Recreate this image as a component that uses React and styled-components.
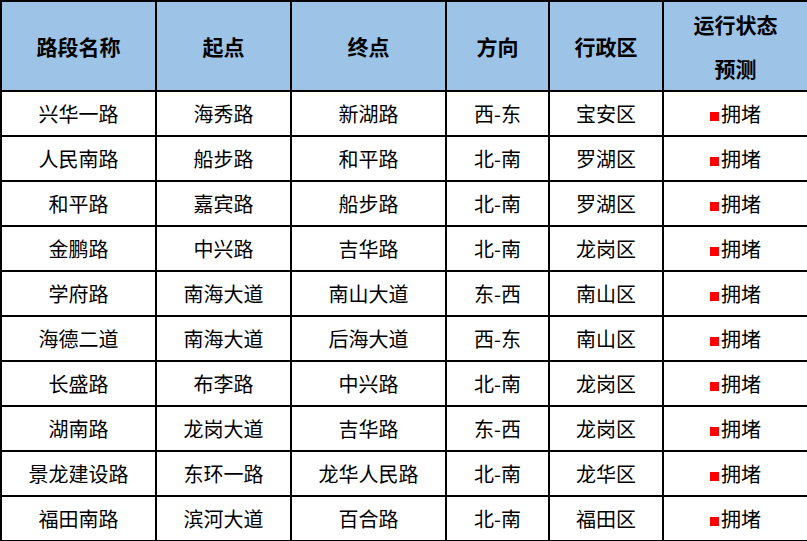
import React from "react";
import styled, { createGlobalStyle } from "styled-components";

const GlobalStyle = createGlobalStyle`
    html, body {
        margin: 0;
        padding: 0;
        background: #ffffff;
    }
    body {
        font-family: "Noto Sans CJK SC", "Noto Sans", sans-serif;
    }
`;

const columns = [155, 135, 155, 103, 114, 145];

const rows = [
    ["兴华一路", "海秀路", "新湖路", "西-东", "宝安区"],
    ["人民南路", "船步路", "和平路", "北-南", "罗湖区"],
    ["和平路", "嘉宾路", "船步路", "北-南", "罗湖区"],
    ["金鹏路", "中兴路", "吉华路", "北-南", "龙岗区"],
    ["学府路", "南海大道", "南山大道", "东-西", "南山区"],
    ["海德二道", "南海大道", "后海大道", "西-东", "南山区"],
    ["长盛路", "布李路", "中兴路", "北-南", "龙岗区"],
    ["湖南路", "龙岗大道", "吉华路", "东-西", "龙岗区"],
    ["景龙建设路", "东环一路", "龙华人民路", "北-南", "龙华区"],
    ["福田南路", "滨河大道", "百合路", "北-南", "福田区"],
];

const Table = styled.table`
    width: 807px;
    table-layout: fixed;
    border-collapse: collapse;
    color: #000000;
`;

const HeadCell = styled.th`
    height: 86px;
    padding: 0;
    background: #9dc3e6;
    border: 2px solid #000000;
    font-size: 21px;
    font-weight: 700;
    line-height: 44px;
    text-align: center;
`;

const Cell = styled.td`
    height: 43px;
    padding: 0;
    border: 2px solid #000000;
    font-size: 20px;
    line-height: 43px;
    text-align: center;
    white-space: nowrap;
`;

const StatusMark = styled.span`
    display: inline-block;
    width: 9px;
    height: 9px;
    margin-right: 2px;
    background: #ff0000;
    vertical-align: 1px;
`;

export default function App() {
    return (
        <>
            <GlobalStyle />
            <Table>
                <colgroup>
                    {columns.map((w, i) => (
                        <col key={i} style={{ width: w }} />
                    ))}
                </colgroup>
                <thead>
                    <tr>
                        <HeadCell>路段名称</HeadCell>
                        <HeadCell>起点</HeadCell>
                        <HeadCell>终点</HeadCell>
                        <HeadCell>方向</HeadCell>
                        <HeadCell>行政区</HeadCell>
                        <HeadCell>
                            运行状态
                            <br />
                            预测
                        </HeadCell>
                    </tr>
                </thead>
                <tbody>
                    {rows.map((row, i) => (
                        <tr key={i}>
                            {row.map((text, j) => (
                                <Cell key={j}>{text}</Cell>
                            ))}
                            <Cell>
                                <StatusMark />
                                拥堵
                            </Cell>
                        </tr>
                    ))}
                </tbody>
            </Table>
        </>
    );
}
